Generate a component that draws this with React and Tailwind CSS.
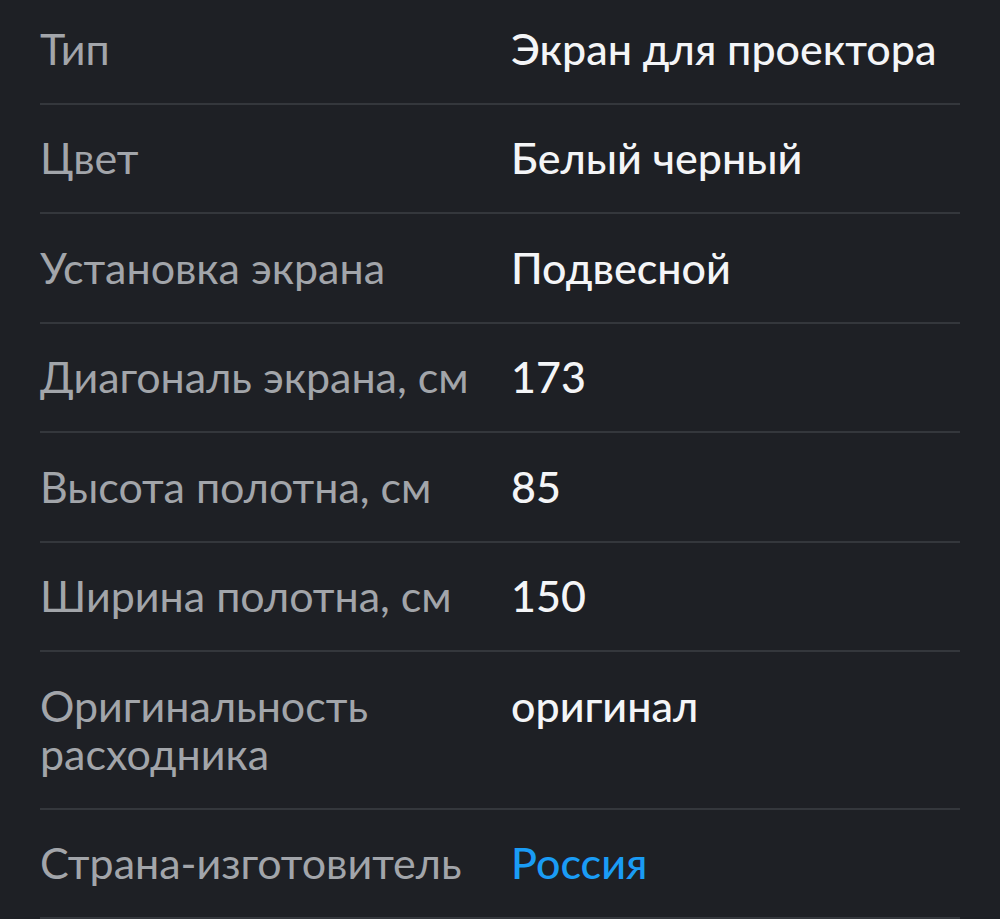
const specs = [
  { label: 'Тип', value: 'Экран для проектора' },
  { label: 'Цвет', value: 'Белый черный' },
  { label: 'Установка экрана', value: 'Подвесной' },
  { label: 'Диагональ экрана, см', value: '173' },
  { label: 'Высота полотна, см', value: '85' },
  { label: 'Ширина полотна, см', value: '150' },
  { label: 'Оригинальность расходника', value: 'оригинал', wrap: true },
  { label: 'Страна-изготовитель', value: 'Россия', link: true },
];

export default function App() {
  return (
    <div className="min-h-[919px] bg-[#1e2025] px-10 font-['Lato',sans-serif] text-[43px] leading-[48px] overflow-hidden">
      <div className="-mt-[5px]">
        {specs.map((s) => (
          <div
            key={s.label}
            className="grid grid-cols-[471px_1fr] items-start py-[29.75px] border-b-2 border-[#34373c]"
          >
            <span className={s.wrap ? 'text-[#a2a5aa] max-w-[380px]' : 'text-[#a2a5aa] whitespace-nowrap'}>
              {s.label}
            </span>
            <span className={s.link ? 'text-[#1a9cf5] font-medium' : 'text-[#f4f5f7] font-medium'}>
              {s.value}
            </span>
          </div>
        ))}
      </div>
    </div>
  );
}
